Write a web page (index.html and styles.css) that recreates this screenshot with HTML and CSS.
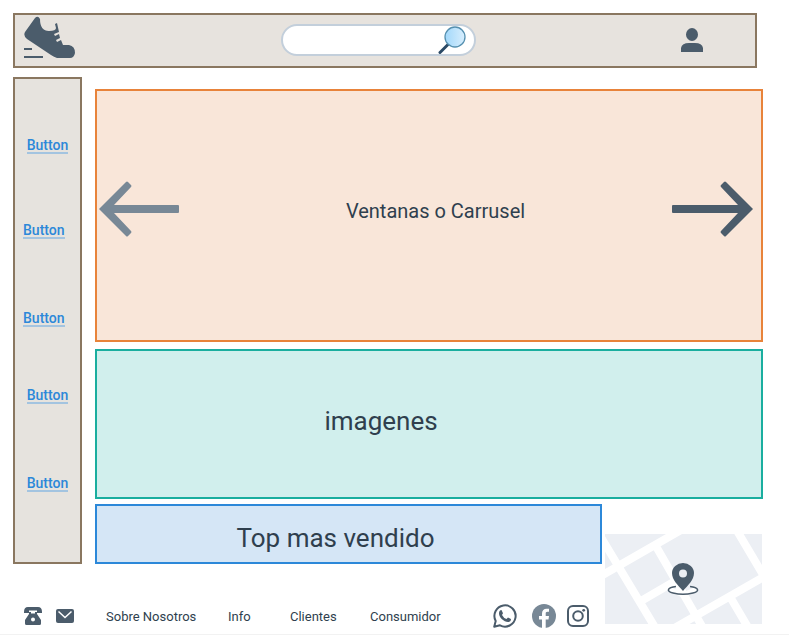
FILE: index.html
```html
<!DOCTYPE html>
<html lang="es">
<head>
<meta charset="utf-8">
<title>Tienda de calzado</title>
<link rel="stylesheet" href="styles.css">
</head>
<body>
<div class="page">
  <header class="header">
    <a class="logo" href="#" aria-label="Inicio">
      <svg width="52" height="44" viewBox="0 0 52 44">
        <path class="dark" d="M1 16 11 2Q14-1 16 3Q16 15 25 15Q32 15 32 12L31 8 33 7 35 16 30 18 31 20 35 18 36 22 32 24 33 26 37 24 39 29H45Q51 30 51 37Q50 42 46 42H33Q30 41 27 39L3 23Q-1 20 1 16Z"/>
        <path class="stroke" stroke-width="2" d="M0 33H8M0 41H19"/>
      </svg>
    </a>
    <form class="search">
      <input class="search-input" type="search" aria-label="Buscar">
      <button class="search-button" type="submit" aria-label="Buscar">
        <svg width="28" height="28" viewBox="0 0 28 28">
          <defs><linearGradient id="lens"><stop offset="0" stop-color="#a2d8fb"/><stop offset="1" stop-color="#d8eefd"/></linearGradient></defs>
          <path d="M2 26.500 9.500 19" stroke="#2b4a66" stroke-width="3" stroke-linecap="round"/>
          <circle cx="17" cy="11" r="10" fill="url(#lens)" stroke="#5590b0" stroke-width="1.300"/>
        </svg>
      </button>
    </form>
    <a class="user" href="#" aria-label="Mi cuenta">
      <svg width="22" height="24" viewBox="0 0 22 24">
        <ellipse class="dark" cx="11" cy="6.500" rx="6" ry="6.500"/>
        <path class="dark" d="M0 24V20Q1 15 8 15H14Q21 15 22 20V24Z"/>
      </svg>
    </a>
  </header>

  <main class="layout">
    <nav class="sidebar">
      <a class="side-link" href="#">Button</a>
      <a class="side-link start" href="#">Button</a>
      <a class="side-link start" href="#">Button</a>
      <a class="side-link" href="#">Button</a>
      <a class="side-link" href="#">Button</a>
    </nav>
    <section class="carousel">
      <button class="arrow" type="button" aria-label="Anterior">
        <svg width="80" height="56" viewBox="0 0 80 56">
          <path class="light" d="M0 28 27 1Q28 0 29 1L32 4Q33 5 32 6L15 24H79Q80 24 80 25V31Q80 32 79 32H15L32 50Q33 51 32 52L29 55Q28 56 27 55Z"/>
        </svg>
      </button>
      <h2 class="carousel-title">Ventanas o Carrusel</h2>
      <button class="arrow" type="button" aria-label="Siguiente">
        <svg width="82" height="56" viewBox="0 0 82 56">
          <path class="dark" d="M82 28 55 1Q54 0 53 1L50 4Q49 5 50 6L67 24H2Q1 24 1 25V31Q1 32 2 32H67L50 50Q49 51 50 52L53 55Q54 56 55 55Z"/>
        </svg>
      </button>
    </section>
    <section class="images"><h2 class="title">imagenes</h2></section>
    <section class="top"><h2 class="title">Top mas vendido</h2></section>
    <a class="map" href="#" aria-label="Ubicación">
      <svg width="100%" height="90" viewBox="0 0 157 90" preserveAspectRatio="xMidYMid slice">
        <path fill="#eceff4" d="M0 0H157V90H0Z"/>
        <path fill="none" stroke="#fff" stroke-width="8" d="M-4 42 76-4M-9-5 51 95M52 14 98 94M66 96 162 41M131-5 160 44M124 61 144 95M36 67 72 46"/>
        <path fill="none" stroke="#fff" stroke-width="5" d="M64 55 78 61 92 55"/>
        <path class="stroke" stroke-width="1.500" d="M71 52.500C62 53.500 61 57.500 68 59C74 60.500 82 60.500 88 59C95 57.500 94 53.500 85 52.500"/>
        <path class="dark" fill-rule="evenodd" d="M78 57C73 51 67 46 67 39A11 10 0 0 1 89 39C89 46 83 51 78 57ZM78 35.500A4 4 0 1 0 78 43.500A4 4 0 1 0 78 35.500Z"/>
      </svg>
    </a>
    <footer class="footer">
      <a href="#" aria-label="Teléfono">
        <svg width="18" height="18" viewBox="0 0 18 18">
          <path class="dark" d="M0 5Q0 0 4 0H14Q18 0 18 5V6H13V3.500H5V6H0Z"/>
          <path class="dark" fill-rule="evenodd" d="M5 5H7V6.500H11V5H13V7L17 13V16.500Q17 18 15.500 18H2.500Q1 18 1 16.500V13L5 7ZM9 10.500A2 2 0 1 0 9 14.500A2 2 0 1 0 9 10.500Z"/>
        </svg>
      </a>
      <a href="#" aria-label="Correo">
        <svg width="18" height="14" viewBox="0 0 18 14">
          <rect class="dark" width="18" height="14" rx="2"/>
          <path d="M2.500 2.500 9 8.500 15.500 2.500" fill="none" stroke="#fff" stroke-width="1.500"/>
        </svg>
      </a>
      <a class="foot-link" href="#">Sobre Nosotros</a>
      <a class="foot-link" href="#">Info</a>
      <a class="foot-link" href="#">Clientes</a>
      <a class="foot-link" href="#">Consumidor</a>
      <a href="#" aria-label="WhatsApp">
        <svg width="24" height="24" viewBox="0 0 24 24">
          <path class="stroke" stroke-width="2" stroke-linejoin="round" d="M1.200 22.800 2.700 17A10.600 10.600 0 1 1 7 21.300Z"/>
          <path class="dark" d="M8.500 6 10 9.300 9 11Q10.500 14 13.500 15L15 13.500 18 15Q18 18 15 18C11 18 6 13.500 6 9.500Q6 6 8.500 6Z"/>
        </svg>
      </a>
      <a href="#" aria-label="Facebook">
        <svg width="24" height="24" viewBox="0 0 24 24">
          <circle class="light" cx="12" cy="12" r="12"/>
          <path fill="#fff" d="M10 24V15.500H7V12H10V9.500C10 6.500 12 4.800 14.500 4.800H17V7.800H15.500C14 7.800 13.700 8.500 13.700 9.700V12H17L16.500 15.500H13.700V24Z"/>
        </svg>
      </a>
      <a href="#" aria-label="Instagram">
        <svg width="22" height="22" viewBox="0 0 22 22">
          <rect class="stroke" stroke-width="2" x="1" y="1" width="20" height="20" rx="5"/>
          <circle class="stroke" stroke-width="2" cx="11" cy="11" r="4.800"/>
          <circle class="dark" cx="16.700" cy="5.300" r="1.400"/>
        </svg>
      </a>
    </footer>
  </main>
</div>
</body>
</html>
```

FILE: styles.css
```css
* { box-sizing: border-box; }

body {
  margin: 0;
  background: #fff;
  color: #2f3f4e;
  font-family: Roboto, "Liberation Sans", sans-serif;
}

svg { display: block; }
a { color: inherit; text-decoration: none; }
button { padding: 0; border: 0; background: none; cursor: pointer; }
h2 { margin: 0; font-weight: 400; }

.dark { fill: #4b5c6b; }
.light { fill: #788896; }
.stroke { fill: none; stroke: #4b5c6b; }

.page {
  padding: 13px 26px 6px 13px;
  border-bottom: 1px solid #f2f2f2;
}

.header {
  display: flex;
  align-items: center;
  justify-content: space-between;
  height: 55px;
  margin-right: 6px;
  padding: 0 52px 2px 9px;
  border: 2px solid #8a7760;
  background: #e7e3de;
}

.logo { margin-bottom: 4px; }

.search {
  display: flex;
  align-items: center;
  width: 195px;
  height: 32px;
  padding-right: 8px;
  border: 2px solid #c3cfdb;
  border-radius: 16px;
  background: #fff;
}

.search-input {
  flex: 1;
  min-width: 0;
  padding: 0 4px 0 12px;
  border: 0;
  outline: 0;
  background: none;
  font: inherit;
}

.layout {
  display: grid;
  grid-template-columns: 82px minmax(0, 1fr) 161px;
  grid-template-areas:
    "side carousel carousel"
    "side images images"
    "side top map"
    "footer footer map";
  margin-top: 9px;
}

.sidebar {
  grid-area: side;
  display: grid;
  grid-template-rows: 85px 88px 77px 88px auto;
  align-content: start;
  justify-items: center;
  align-items: start;
  margin-right: 13px;
  padding: 57px 8px 0;
  border: 2px solid #8a7760;
  background: #e6e3de;
}

.side-link {
  padding-top: 2px;
  border-bottom: 2px solid #a3c4e0;
  color: #2c88d9;
  font-size: 14px;
  font-weight: 500;
  line-height: 14px;
}

.start { justify-self: start; }

.carousel {
  grid-area: carousel;
  display: grid;
  grid-template-columns: auto 1fr auto;
  align-items: center;
  min-height: 253px;
  margin-top: 12px;
  padding: 0 8px 14px 2px;
  border: 2px solid #e8833a;
  background: #f9e6d9;
}

.carousel-title {
  padding: 4px 0 0 21px;
  font-size: 20px;
  line-height: 24px;
  text-align: center;
}

.images, .top {
  display: flex;
  align-items: center;
  justify-content: center;
  border: 2px solid;
}

.images {
  grid-area: images;
  min-height: 150px;
  margin-top: 7px;
  padding: 0 96px 6px 0;
  border-color: #1aae9f;
  background: #d1efed;
}

.top {
  grid-area: top;
  min-height: 60px;
  margin-top: 5px;
  padding: 8px 26px 0 0;
  border-color: #2c88d9;
  background: #d5e6f6;
}

.title {
  font-size: 26px;
  line-height: 32px;
}

.map {
  grid-area: map;
  align-self: start;
  margin: 35px 1px 0 3px;
}

.footer {
  grid-area: footer;
  display: grid;
  grid-template-columns: 32fr 50fr 122fr 62fr 80fr 123fr 39fr 35fr 22fr;
  align-items: center;
  padding: 40px 13px 0 11px;
}

.foot-link {
  padding-top: 2px;
  font-size: 13px;
  line-height: 16px;
}
```
